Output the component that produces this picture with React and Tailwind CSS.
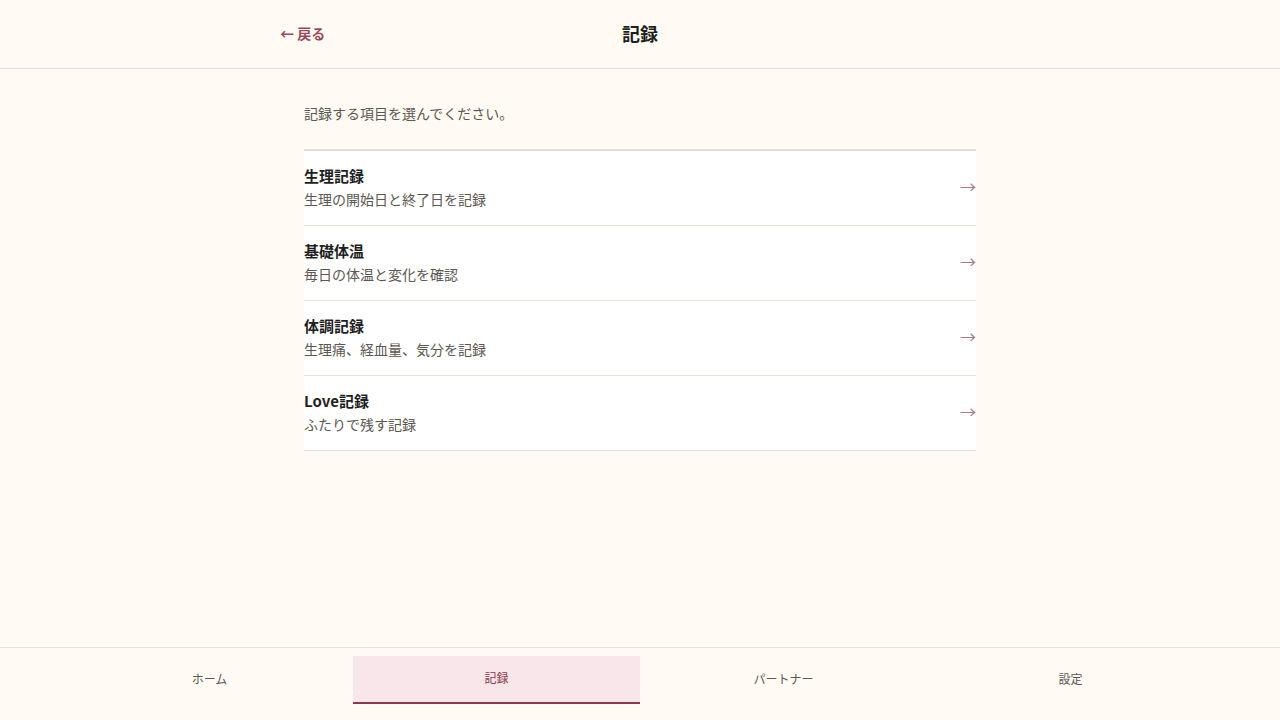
import React from "react";

const items = [
  { title: "生理記録", desc: "生理の開始日と終了日を記録" },
  { title: "基礎体温", desc: "毎日の体温と変化を確認" },
  { title: "体調記録", desc: "生理痛、経血量、気分を記録" },
  { title: "Love記録", desc: "ふたりで残す記録" },
];

const tabs = ["ホーム", "記録", "パートナー", "設定"];

const App = () => {
  return (
    <div
      className="min-h-screen flex flex-col bg-[#fffbf4] text-[#1f1f1f]"
      style={{ fontFamily: '"Noto Sans CJK JP", "Noto Sans", sans-serif' }}
    >
      {/* header */}
      <header className="h-[69px] border-b border-[#e2ddd6]">
        <div className="max-w-3xl mx-auto px-6 h-[66px] grid grid-cols-3 items-center">
          <a href="#" className="text-[14px] font-bold text-[#9a4a5c] justify-self-start">
            ← 戻る
          </a>
          <h1 className="text-[18px] font-bold text-center">記録</h1>
          <div />
        </div>
      </header>

      {/* body */}
      <main className="flex-1">
        <div className="max-w-2xl mx-auto pt-[34px]">
          <p className="text-[14px] text-[#5c5752] leading-[20px]">記録する項目を選んでください。</p>
          <ul className="mt-[26px] border-t-2 border-[#e2ddd3]">
            {items.map((item) => (
              <li key={item.title} className="border-b border-[#e4e0da] bg-white">
                <a href="#" className="h-[74px] flex items-center justify-between">
                  <div className="flex flex-col mb-[2px]">
                    <span className="text-[15px] font-bold leading-[24px]">{item.title}</span>
                    <span className="text-[14px] text-[#5c5752] leading-[22px]">{item.desc}</span>
                  </div>
                  <span className="text-[16px] text-[#a8778a] mb-[4px]">→</span>
                </a>
              </li>
            ))}
          </ul>
        </div>
      </main>

      {/* bottom nav */}
      <nav className="border-t border-[#e6e1da] pt-2 pb-4">
        <div className="w-[1148px] mx-auto grid grid-cols-4">
          {tabs.map((t) => (
            <a
              key={t}
              href="#"
              className={
                t === "記録"
                  ? "h-[48px] pb-[2px] flex items-center justify-center text-[12px] bg-[#f9e6ea] text-[#8b3a4d] border-b-2 border-[#8b3a4d]"
                  : "h-[48px] pb-[2px] flex items-center justify-center text-[12px] text-[#5c5752]"
              }
            >
              {t}
            </a>
          ))}
        </div>
      </nav>
    </div>
  );
};

export default App;
